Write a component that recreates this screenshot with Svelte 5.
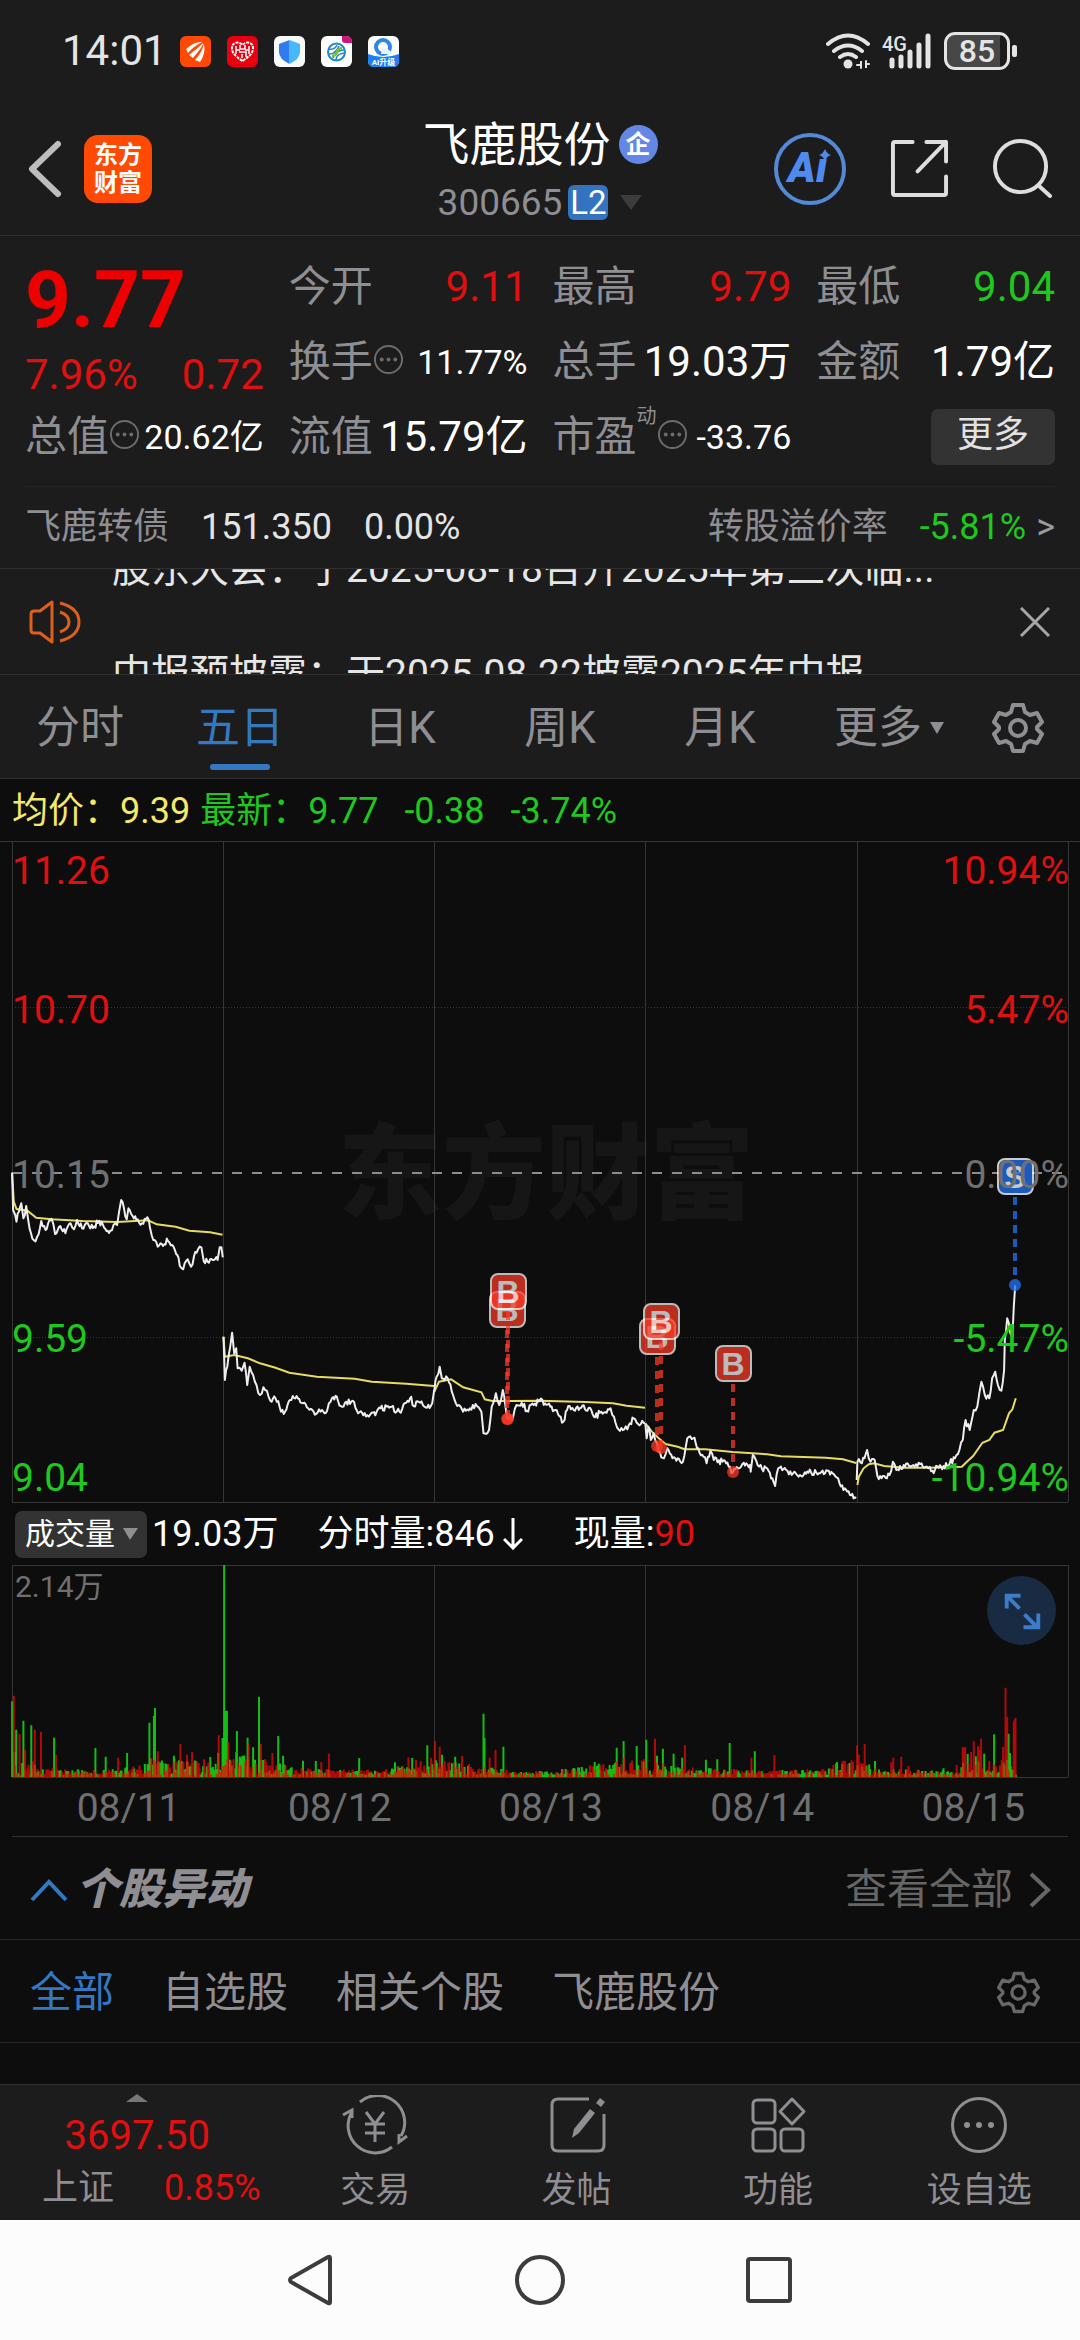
<script>
  // Chart samples: x in 2.904 units per pixel, y in thirds of a pixel.
  const SX = 2.904;
  const PRICE_TOP = 299;

  const priceDays = [
    [[35,98],[38,210],[44,225],[48,245],[55,215],[62,190],[68,235],[76,198],[82,240],[90,280],[98,300],[108,290],[120,243],[132,270],[150,236],[160,282],[175,258],[190,280],[205,250],[215,268],[224,240],[238,265],[255,250],[270,264],[288,242],[302,262],[320,272],[330,254],[340,255],[346,215],[352,180],[360,205],[368,238],[373,205],[385,228],[400,238],[412,250],[428,232],[436,265],[445,300],[458,320],[470,312],[488,303],[500,315],[515,345],[522,378],[532,388],[545,358],[555,380],[563,350],[575,328],[585,322],[592,365],[610,358],[632,360],[638,322],[643,322],[647,352]],
    [[649,590],[653,720],[660,680],[668,625],[674,578],[680,640],[686,625],[690,685],[702,692],[710,668],[718,735],[725,680],[735,705],[745,735],[755,765],[765,742],[775,752],[785,782],[800,775],[812,800],[824,822],[835,795],[850,768],[865,775],[880,790],[895,805],[918,822],[935,810],[950,812],[960,785],[978,770],[990,798],[1005,785],[1028,785],[1040,820],[1055,826],[1075,824],[1090,826],[1105,805],[1130,803],[1160,815],[1180,788],[1194,770],[1198,795],[1220,788],[1240,803],[1255,790],[1261,750]],
    [[1261,755],[1268,710],[1277,680],[1283,715],[1300,715],[1312,755],[1328,798],[1345,815],[1365,805],[1385,798],[1398,815],[1404,880],[1420,870],[1428,800],[1440,760],[1450,795],[1460,750],[1468,800],[1473,835],[1490,832],[1500,795],[1515,788],[1530,812],[1550,795],[1568,780],[1583,790],[1598,800],[1613,810],[1636,845],[1650,798],[1666,810],[1688,803],[1713,803],[1728,832],[1746,815],[1773,805],[1783,830],[1796,868],[1813,868],[1826,855],[1840,835],[1853,852],[1873,848]],
    [[1874,850],[1878,895],[1883,860],[1890,900],[1898,880],[1908,910],[1913,935],[1928,955],[1938,925],[1953,955],[1968,955],[1983,965],[1996,895],[2013,895],[2028,925],[2043,950],[2052,970],[2063,932],[2073,960],[2098,965],[2116,980],[2128,997],[2143,985],[2160,968],[2178,975],[2180,995],[2186,945],[2200,975],[2213,988],[2228,985],[2243,1015],[2251,1038],[2260,985],[2283,990],[2303,1000],[2323,1005],[2348,998],[2378,1000],[2403,992],[2418,1000],[2438,1030],[2453,1045],[2468,1065],[2486,1075]],
    [[2488,1020],[2490,965],[2503,970],[2518,930],[2528,965],[2540,960],[2548,1008],[2568,1008],[2583,1005],[2593,965],[2603,990],[2628,980],[2648,978],[2668,968],[2688,980],[2708,992],[2733,980],[2758,970],[2773,955],[2786,930],[2796,900],[2804,840],[2816,870],[2828,810],[2838,800],[2844,760],[2850,725],[2860,765],[2873,775],[2881,715],[2890,695],[2898,735],[2908,752],[2916,690],[2918,600],[2925,535],[2934,580],[2940,590],[2944,500],[2948,436]]
  ];

  const averageDays = [
    [[35,98],[40,185],[48,207],[80,212],[105,233],[150,238],[240,243],[340,246],[430,241],[455,253],[510,260],[550,272],[610,277],[646,284]],
    [[649,590],[653,650],[680,645],[720,655],[755,670],[800,683],[840,698],[920,710],[1030,716],[1080,725],[1180,731],[1261,738]],
    [[1261,755],[1275,725],[1310,718],[1345,742],[1398,757],[1408,778],[1430,783],[1568,782],[1700,786],[1780,790],[1820,797],[1873,803]],
    [[1874,850],[1893,875],[1913,895],[1933,912],[1968,920],[1988,928],[2048,928],[2128,936],[2228,943],[2268,949],[2398,953],[2448,958],[2486,969]],
    [[2490,1035],[2494,1010],[2508,985],[2523,973],[2538,970],[2568,978],[2628,983],[2698,983],[2793,980],[2808,965],[2826,948],[2853,908],[2873,900],[2888,878],[2913,870],[2930,820],[2940,808],[2950,775]]
  ];

  function randomFrom(seed) {
    let s = seed;
    return () => {
      s = (s * 16807) % 2147483647;
      return s / 2147483647;
    };
  }

  const point = (x, y) => `${(x / SX).toFixed(1)},${(PRICE_TOP + y / 3).toFixed(1)}`;

  function smoothLine(samples) {
    return samples.map(([x, y]) => point(x, y)).join(' ');
  }

  // Minute ticks wobble by about half a cent between the stored samples.
  function tickLine(samples, seed) {
    const random = randomFrom(seed);
    const out = [];
    for (let i = 0; i < samples.length - 1; i++) {
      const [x0, y0] = samples[i];
      const [x1, y1] = samples[i + 1];
      out.push(point(x0, y0));
      const steps = Math.floor((x1 - x0) / 3.5);
      for (let k = 1; k < steps; k++) {
        const t = k / steps;
        out.push(point(x0 + (x1 - x0) * t, y0 + (y1 - y0) * t + (random() - 0.5) * 19));
      }
    }
    const last = samples[samples.length - 1];
    out.push(point(last[0], last[1]));
    return out.join(' ');
  }

  const priceLines = priceDays.map((d, i) => tickLine(d, 41 + i * 97));
  const averageLines = averageDays.map(smoothLine);

  const markers = [
    { x: 507, top: 451, dot: 578, kind: 'B' },
    { x: 508, top: 433, dot: 578, kind: 'B' },
    { x: 657, top: 478, dot: 605, kind: 'B' },
    { x: 661, top: 463, dot: 607, kind: 'B' },
    { x: 733, top: 505, dot: 631, kind: 'B' },
    { x: 1015, top: 318, dot: 444, kind: 'S' }
  ];

  const leftAxis = [['11.26', 43, 'up'], ['10.70', 182, 'up'], ['10.15', 347, 'flat'], ['9.59', 511, 'down'], ['9.04', 650, 'down']];
  const rightAxis = [['10.94%', 43, 'up'], ['5.47%', 182, 'up'], ['0.00%', 347, 'flat'], ['-5.47%', 511, 'down'], ['-10.94%', 650, 'down']];
  const columns = [12, 223, 434, 645, 857, 1068];

  const volumeLevel = [[35,90],[60,60],[130,25],[200,20],[300,15],[400,30],[450,60],[540,45],[620,60],[660,90],[700,60],[780,50],[850,25],[950,20],[1100,15],[1200,35],[1270,60],[1350,35],[1480,15],[1568,12],[1650,20],[1780,40],[1880,55],[1960,25],[2100,20],[2200,15],[2380,18],[2450,50],[2500,40],[2560,20],[2780,12],[2800,70],[2850,50],[2900,30],[2920,80],[2953,30]];
  const greenPeaks = [[35,227],[47,142],[68,169],[91,155],[157,118],[277,87],[307,61],[369,72],[434,163],[447,184],[450,207],[505,64],[646,117],[651,637],[656,199],[659,199],[688,138],[719,118],[735,89],[752,241],[808,123],[822,64],[880,49],[917,48],[1043,57],[1147,44],[1197,57],[1241,95],[1284,67],[1322,61],[1404,190],[1407,117],[1462,91],[1727,45],[1791,88],[1811,108],[1849,93],[1877,112],[1908,64],[1925,85],[1956,70],[1981,58],[2050,52],[2083,53],[2119,102],[2192,77],[2446,39],[2541,48],[2740,26],[2858,70],[2887,128],[2929,130],[2933,72]];
  const redPeaks = [[40,244],[57,129],[73,82],[101,142],[119,136],[163,67],[343,57],[458,77],[524,99],[543,67],[558,75],[635,125],[663,104],[722,100],[758,100],[791,72],[933,45],[955,70],[1186,59],[1208,52],[1252,57],[1263,108],[1277,91],[1342,63],[1422,58],[1439,82],[1813,57],[1830,42],[1902,115],[1989,96],[2182,58],[2249,66],[2473,50],[2489,95],[2494,67],[2511,99],[2588,44],[2594,58],[2617,61],[2638,34],[2778,36],[2796,89],[2799,86],[2803,90],[2820,75],[2828,107],[2840,92],[2844,80],[2849,115],[2873,48],[2913,90],[2920,268],[2925,180],[2944,165],[2946,172],[2949,177]];

  function levelAt(x) {
    for (let i = 1; i < volumeLevel.length; i++) {
      const [x1, y1] = volumeLevel[i];
      const [x0, y0] = volumeLevel[i - 1];
      if (x <= x1) return y0 + ((y1 - y0) * (x - x0)) / (x1 - x0);
    }
    return 12;
  }

  function buildVolume() {
    const random = randomFrom(733);
    const paths = { green: '', red: '' };
    const bar = (x, h) => `M${(x / SX).toFixed(1)} 212v${(-h / 3).toFixed(1)}`;
    for (let x = 36; x < 2953; x += 2.6) {
      const h = 6 + levelAt(x) * Math.pow(random(), 1.4);
      paths[random() < 0.42 ? 'green' : 'red'] += bar(x, h);
    }
    greenPeaks.forEach(([x, h]) => (paths.green += bar(x, h)));
    redPeaks.forEach(([x, h]) => (paths.red += bar(x, h)));
    return paths;
  }
  const volume = buildVolume();

  const dates = ['08/11', '08/12', '08/13', '08/14', '08/15'];
  const periods = ['分时', '五日', '日K', '周K', '月K'];
  const filters = ['全部', '自选股', '相关个股', '飞鹿股份'];
  let period = $state('五日');
  let filter = $state('全部');
</script>

{#snippet info()}
  <svg class="info" viewBox="0 0 32 32" aria-hidden="true">
    <circle cx="16" cy="16" r="14" fill="none" stroke="#6c6c6e" stroke-width="2" />
    <circle cx="9" cy="16" r="2" /><circle cx="16" cy="16" r="2" /><circle cx="23" cy="16" r="2" />
  </svg>
{/snippet}

{#snippet gear()}
  <svg class="gear" viewBox="0 0 52 52" fill="none" stroke="currentColor" stroke-width="4" stroke-linejoin="round" aria-hidden="true">
    <path d="M21 3h10l2 7 5 3 7-2 5 9-5 5v2l5 5-5 9-7-2-5 3-2 7H21l-2-7-5-3-7 2-5-9 5-5v-2l-5-5 5-9 7 2 5-3z" />
    <circle cx="26" cy="26" r="8" />
  </svg>
{/snippet}

<main>
  <div class="status">
    <span class="clock">14:01</span>
    <div class="apps">
      <svg viewBox="0 0 31 31"><rect width="31" height="31" rx="6" fill="#ff4a06" /><path d="M6 13q9-8 16-7Q14 10 8 17zM9 19q8-6 14-12 1 2-10 15zM15 24q6-6 9-16 2 9-4 18z" fill="#fff" /></svg>
      <svg viewBox="0 0 31 31"><rect width="31" height="31" rx="6" fill="#e90010" /><path d="M15.500 25C8 20 5 17 5 12c0-6 7-7 10.500-3C19 5 26 6 26 12c0 5-3 8-10.500 13z" fill="#e90010" stroke="#fff" stroke-width="2" stroke-dasharray="3 1" /><path d="M9 10v8M13 9v4h5V9M22 10v8M12 16h7v5M9 14h4M18 14h4M15 18v4" stroke="#fff" stroke-width="1.500" fill="none" /></svg>
      <svg viewBox="0 0 31 31"><rect width="31" height="31" rx="6" fill="#f8f9fb" /><path d="M15.500 4 26 8v8q0 7-10.500 12z" fill="#45b8ff" /><path d="M15.500 4 5 8v8q0 7 10.500 12z" fill="#2f7cf0" /></svg>
      <svg viewBox="0 0 31 31"><rect width="31" height="31" rx="6" fill="#fff" /><path d="M21 0h4q6 0 6 6v1h-7q-3 0-3-3z" fill="#cc1480" /><circle cx="15.500" cy="16" r="8.500" fill="none" stroke="#2287c9" stroke-width="2" /><path d="M8 13q6 1 8-4M7 18q7 1 11-8M15 24q0-6 8-7M12 22q3-8 11-8" fill="none" stroke="#2287c9" stroke-width="1.500" /><path d="M11 20q5-1 5-4t5-4" fill="none" stroke="#7cc22e" stroke-width="2.500" /></svg>
      <svg viewBox="0 0 31 31"><rect width="31" height="31" rx="6" fill="#fff" /><path d="M0 18q15 6 31 0v7q0 6-6 6H6q-6 0-6-6z" fill="#1c80f2" /><circle cx="15" cy="11" r="7" fill="none" stroke="#2a86ee" stroke-width="4" /><path d="M14 13q6-3 10 5H13z" fill="#e6f2ff" /><text x="15.500" y="29" text-anchor="middle" class="tiny">AI升级</text></svg>
    </div>
    <div class="signals">
      <svg class="wifi" viewBox="0 0 44 36" fill="none" stroke="#e4e4e4" stroke-width="4" stroke-linecap="round">
        <path d="M2 11Q22-6 42 11M8 18q14-11 28 0M14 24q8-6 16 0" /><circle cx="22" cy="31" r="4.500" fill="#e4e4e4" stroke="none" /><path d="M31 32h4v-4v7M40 28v7v-4h3" stroke-width="2" />
      </svg>
      <svg class="cell" viewBox="0 0 50 36"><text x="0" y="18" class="net">4G</text><g stroke="#e4e4e4" stroke-width="5" stroke-linecap="round"><path d="M10 27v6M19 24v9M28 19v14M37 12v21M46 3v30" /></g></svg>
      <span class="battery"><span>85</span></span>
    </div>
  </div>

  <header class="top">
    <div class="side">
      <button class="bare" aria-label="返回"><svg class="back" viewBox="0 0 34 58"><path d="M30 4 4 29l26 25" fill="none" stroke="#bdbdbd" stroke-width="6" stroke-linecap="round" stroke-linejoin="round" /></svg></button>
      <span class="brand"><span>东方</span><span>财富</span></span>
    </div>
    <div class="title">
      <h1>飞鹿股份<span class="corp">企</span></h1>
      <button class="bare code">300665<span class="level">L2</span><svg class="tri" viewBox="0 0 22 15"><path d="M0 0h22L11 15z" fill="#3c3c3e" /></svg></button>
    </div>
    <div class="side actions">
      <button class="bare" aria-label="Ai">
        <svg class="ai" viewBox="0 0 72 72"><circle cx="36" cy="36" r="34" fill="none" stroke="#5489d6" stroke-width="4" /><text x="14" y="49" class="ailogo">Aı</text><path d="M51 16q2 5 6 6-4 1-6 6-2-5-6-6 4-1 6-6z" fill="#4f8bef" /></svg>
      </button>
      <button class="bare" aria-label="分享">
        <svg class="share" viewBox="0 0 60 60" fill="none" stroke="#dedede" stroke-width="4" stroke-linecap="round" stroke-linejoin="round"><path d="M23 3H5q-2 0-2 2v50q0 2 2 2h50q2 0 2-2V38M37 3h20v20M57 3 28 33" /></svg>
      </button>
      <button class="bare" aria-label="搜索">
        <svg class="share" viewBox="0 0 60 60" fill="none" stroke="#dedede" stroke-width="4" stroke-linecap="round"><circle cx="28" cy="28" r="26" /><path d="M46 47 58 58" /></svg>
      </button>
    </div>
  </header>

  <section class="quote">
    <div class="last"><strong>9.77</strong><div class="change up"><span>7.96%</span><span>0.72</span></div></div>
    <div class="cell-item"><span>今开</span><b class="up">9.11</b></div>
    <div class="cell-item"><span>最高</span><b class="up">9.79</b></div>
    <div class="cell-item"><span>最低</span><b class="down">9.04</b></div>
    <div class="cell-item"><span class="tagged">换手{@render info()}</span><b class="small">11.77%</b></div>
    <div class="cell-item"><span>总手</span><b>19.03万</b></div>
    <div class="cell-item"><span>金额</span><b>1.79亿</b></div>
    <div class="cell-item"><span class="tagged">总值{@render info()}</span><b class="small">20.62亿</b></div>
    <div class="cell-item"><span>流值</span><b>15.79亿</b></div>
    <div class="cell-item"><span class="tagged">市盈<sup>动</sup>{@render info()}</span><b class="small">-33.76</b></div>
    <div class="cell-item end"><button class="more">更多</button></div>
  </section>

  <a class="bond" href="#bond">
    <span class="name">飞鹿转债</span><span>151.350</span><span>0.00%</span>
    <span class="name push">转股溢价率</span><span class="down">-5.81%</span><span class="gt">&gt;</span>
  </a>

  <section class="news">
    <svg class="speaker" viewBox="0 0 52 44" fill="none" stroke="#dd5f1c" stroke-width="3" stroke-linejoin="round"><path d="M23 2v40L11 33H5q-3 0-3-3V14q0-3 3-3h6z" /><path d="M31 3q19 5 19 19T31 41M31 12q9 3 9 10t-9 10" /></svg>
    <div class="ticker"><p>股东大会：于2025-08-18召开2025年第三次临...</p><p>中报预披露：于2025-08-22披露2025年中报</p></div>
    <button class="bare" aria-label="关闭"><svg class="close" viewBox="0 0 30 30"><path d="M1 1l28 28M29 1 1 29" stroke="#a6a6a8" stroke-width="3" /></svg></button>
  </section>

  <nav class="periods">
    {#each periods as p}
      <button class="bare" class:on={period === p} onclick={() => (period = p)}>{p}</button>
    {/each}
    <button class="bare">更多<svg class="caret" viewBox="0 0 14 12"><path d="M0 0h14L7 12z" fill="currentColor" /></svg></button>
    <button class="bare settings" aria-label="设置">{@render gear()}</button>
  </nav>

  <div class="legend">
    <span class="avg">均价：9.39</span><span class="down">最新：9.77</span><span class="down">-0.38</span><span class="down">-3.74%</span>
  </div>

  <svg class="plot" viewBox="0 0 1080 662" role="img" aria-label="五日分时图">
    <text class="watermark" x="546" y="370" text-anchor="middle">东方财富</text>
    <g stroke="#363636" stroke-width="1">
      {#each columns as x}<path d="M{x}.5 0V661" />{/each}
      <path d="M0 .5H1080M12 661.500H1068" />
      <path d="M12 166.500H1068M12 496.500H1068" stroke-dasharray="1 2" />
    </g>
    <path d="M12 332H1068" stroke="#8c8c8c" stroke-width="2" stroke-dasharray="10 10" />
    {#each averageLines as pts}<polyline points={pts} fill="none" stroke="#e6dc62" stroke-width="2" />{/each}
    {#each priceLines as pts}<polyline points={pts} fill="none" stroke="#eee" stroke-width="2" stroke-linejoin="round" />{/each}
    {#each markers as m}
      <g class={m.kind === 'B' ? 'buy' : 'sell'}>
        <path d="M{m.x} {m.top + 38}V{m.dot}" stroke-width="4" stroke-dasharray="8 6" />
        <circle cx={m.x} cy={m.dot} r="6" />
        <rect x={m.x - 17} y={m.top} width="35" height="35" rx="7" />
        <text x={m.x} y={m.top + 29} text-anchor="middle">{m.kind}</text>
      </g>
    {/each}
    {#each leftAxis as [t, y, c]}<text class="axis {c}" x="12" {y}>{t}</text>{/each}
    {#each rightAxis as [t, y, c]}<text class="axis {c}" x="1069" {y} text-anchor="end">{t}</text>{/each}
  </svg>

  <div class="volume-bar">
    <label class="picker"><select aria-label="指标"><option>成交量</option></select><svg viewBox="0 0 15 12"><path d="M0 0h15L7 12z" fill="#8e8e93" /></svg></label>
    <span class="total">19.03万</span><span class="minute">分时量:846<svg class="fall" viewBox="0 0 20 32"><path d="M10 0v30M1 21l9 9 9-9" fill="none" stroke="#fff" stroke-width="3" /></svg></span><span>现量:<span class="up">90</span></span>
  </div>

  <div class="volume">
    <svg class="plot" viewBox="0 0 1080 213" role="img" aria-label="成交量图">
      <g stroke="#363636" stroke-width="1" fill="none">
        {#each columns as x}<path d="M{x}.5 0V212" />{/each}
        <path d="M12 .5H1068M12 212.500H1068" />
      </g>
      <path d={volume.green} stroke="#14d014" stroke-opacity=".9" stroke-width="2" />
      <path d={volume.red} stroke="#ee0808" stroke-opacity=".72" stroke-width="2" />
      <text class="peak" x="15" y="32">2.14万</text>
    </svg>
    <button class="bare expand" aria-label="全屏"><svg viewBox="0 0 70 70" fill="none" stroke="#3c7cc8" stroke-width="4"><path d="M20 33V20h14M20 20l13 13M38 39l13 13M52 38v14H37" /></svg></button>
  </div>

  <div class="dates">{#each dates as d}<span>{d}</span>{/each}</div>

  <section class="moves">
    <button class="bare fold"><svg viewBox="0 0 38 24"><path d="M2 22 19 4l17 18" fill="none" stroke="#3478c2" stroke-width="4" /></svg><h2>个股异动</h2></button>
    <a href="#all">查看全部<svg viewBox="0 0 22 36"><path d="M2 2l17 16L2 34" fill="none" stroke="currentColor" stroke-width="4" /></svg></a>
  </section>

  <nav class="filters">
    {#each filters as f}
      <button class="bare" class:on={filter === f} onclick={() => (filter = f)}>{f}</button>
    {/each}
    <button class="bare settings" aria-label="设置">{@render gear()}</button>
  </nav>

  <div class="feed"></div>

  <nav class="dock">
    <button class="bare index">
      <svg viewBox="0 0 22 8"><path d="M0 8 11 0l11 8z" fill="#77777a" /></svg>
      <span class="points up">3697.50</span>
      <span class="pair"><span>上证</span><span class="up">0.85%</span></span>
    </button>
    <button class="bare">
      <svg viewBox="0 0 66 60" fill="none" stroke="#8e8e93" stroke-width="3"><path d="M18 7A27 27 0 0 1 59 41M50 52A27 27 0 0 1 10 17M1 20l9-5v8M65 41l-8 6v-8" /><path d="M24 17l9 12 9-12M33 29v18M23 29h20M23 38h20" /></svg>交易
    </button>
    <button class="bare">
      <svg viewBox="0 0 66 60" fill="none" stroke="#8e8e93" stroke-width="3"><path d="M45 4H14q-6 0-6 6v40q0 6 6 6h40q6 0 6-6V19" /><path d="M46 14l5 4-16 20-7 5 2-9zM52 8l4-5 5 4-4 5z" fill="#8e8e93" stroke="none" /></svg>发帖
    </button>
    <button class="bare">
      <svg viewBox="0 0 66 60" fill="none" stroke="#8e8e93" stroke-width="3"><rect x="8" y="5" width="22" height="23" rx="4" /><rect x="8" y="34" width="22" height="22" rx="4" /><rect x="36" y="34" width="22" height="22" rx="4" /><path d="M47 4l12 12.500L47 29 35 16.500z" stroke-linejoin="round" /></svg>功能
    </button>
    <button class="bare">
      <svg viewBox="0 0 66 60" fill="none" stroke="#8e8e93" stroke-width="3"><circle cx="33" cy="30" r="26.500" /><g fill="#8e8e93" stroke="none"><circle cx="21" cy="30" r="3" /><circle cx="33" cy="30" r="3" /><circle cx="45" cy="30" r="3" /></g></svg>设自选
    </button>
  </nav>

  <nav class="system">
    <button class="bare" aria-label="返回"><svg viewBox="0 0 52 52"><path d="M45 4v44q0 2-2 1L6 28q-2-2 0-4L43 3q2-1 2 1z" /></svg></button>
    <button class="bare" aria-label="主页"><svg viewBox="0 0 52 52"><circle cx="26" cy="26" r="23" /></svg></button>
    <button class="bare" aria-label="最近任务"><svg viewBox="0 0 52 52"><rect x="5" y="5" width="42" height="42" rx="2" /></svg></button>
  </nav>
</main>

<style>
  :global(body) { margin: 0; background: #0d0d0d; }
  main { display: flex; flex-direction: column; min-height: 100vh; background: #0d0d0d; color: #fff; font-family: Roboto, "Noto Sans CJK SC", sans-serif; font-size: 36px; line-height: 1; white-space: nowrap; overflow: hidden; }
  main * { box-sizing: border-box; }
  svg { display: block; flex: none; }
  .bare { display: flex; align-items: center; justify-content: center; padding: 0; border: 0; background: none; color: inherit; font: inherit; cursor: pointer; }
  a { color: inherit; text-decoration: none; }
  .up { color: #e01010; }
  .down { color: #1fc81f; }

  .status { display: flex; align-items: center; height: 102px; padding: 0 64px 0 62px; background: #1c1c1c; color: #e4e4e4; }
  .clock { font-size: 42px; }
  .apps { display: flex; gap: 16px; margin-left: 13px; }
  .apps svg { width: 31px; height: 31px; }
  .tiny { font-size: 8px; font-weight: 700; fill: #fff; }
  .signals { display: flex; align-items: center; gap: 12px; margin-left: auto; }
  .wifi { width: 44px; height: 36px; }
  .cell { width: 50px; height: 36px; }
  .net { font-size: 20px; font-weight: 500; fill: #e4e4e4; }
  .battery { position: relative; display: flex; align-items: center; width: 66px; height: 38px; margin-right: 6px; border: 3px solid #e4e4e4; border-radius: 11px; background: linear-gradient(90deg, #474747 88%, #1c1c1c 88%); }
  .battery span { flex: 1; text-align: center; font-size: 32px; font-weight: 500; }
  .battery::after { content: ""; position: absolute; right: -10px; top: 10px; width: 5px; height: 12px; border-radius: 2px; background: #e4e4e4; }

  .top { display: grid; grid-template-columns: 1fr auto 1fr; align-items: center; height: 134px; padding: 0 28px; background: #1c1c1c; border-bottom: 1px solid #303030; }
  .side { display: flex; align-items: center; gap: 22px; }
  .back { width: 34px; height: 58px; }
  .brand { display: flex; flex-direction: column; align-items: center; justify-content: center; gap: 4px; width: 68px; height: 68px; border-radius: 14px; background: #ff4a06; font-size: 24px; font-weight: 700; }
  .title { display: flex; flex-direction: column; align-items: center; gap: 16px; padding-top: 4px; }
  h1 { display: flex; align-items: center; gap: 8px; margin: 0; font-size: 47px; font-weight: 400; }
  .corp { display: grid; place-items: center; width: 39px; height: 39px; border-radius: 50%; background: #6487e6; font-size: 25px; font-weight: 700; }
  .code { gap: 6px; color: #8e8e93; font-size: 37px; }
  .level { display: grid; place-items: center; width: 40px; height: 35px; border-radius: 6px; background: #3374c0; color: #fff; font-size: 33px; }
  .tri { width: 22px; height: 15px; margin-left: 6px; }
  .actions { justify-content: flex-end; gap: 44px; }
  .ai { width: 72px; height: 72px; }
  .ailogo { font: italic 900 42px Roboto, sans-serif; fill: #4f8bef; }
  .share { width: 59px; height: 59px; }

  .quote { display: grid; grid-template-columns: repeat(4, minmax(0, 1fr)); grid-auto-rows: 75px; column-gap: 25px; padding: 13px 25px 12px; background: #1c1c1c; }
  .last { grid-row: span 2; display: flex; flex-direction: column; justify-content: flex-end; gap: 14px; padding-bottom: 3px; }
  .last strong { color: #ee0000; font-size: 80px; font-weight: 700; }
  .change { display: flex; justify-content: space-between; font-size: 42px; }
  .cell-item { display: flex; align-items: center; justify-content: space-between; color: #8e8e93; font-size: 42px; }
  .cell-item b { font-weight: 400; color: #fff; }
  .cell-item b.up { color: #e01010; }
  .cell-item b.down { color: #1fc81f; }
  .cell-item b.small { font-size: 34px; }
  .cell-item.end { justify-content: flex-end; }
  .tagged { display: flex; align-items: center; }
  .info { width: 31px; height: 31px; margin-bottom: 4px; fill: #6c6c6e; }
  sup { align-self: flex-start; margin-top: -10px; font-size: 20px; line-height: 1; }
  .more { width: 124px; height: 56px; padding: 0 0 4px; border: 0; border-radius: 7px; background: #333; color: #e2e2e2; font: inherit; font-size: 36px; }

  .bond { display: flex; align-items: center; height: 83px; padding: 0 25px; gap: 32px; background: #1c1c1c; border-bottom: 1px solid #303030; color: #e4e4e4; background-image: linear-gradient(#242424, #242424); background-size: calc(100% - 50px) 1px; background-position: center top; background-repeat: no-repeat; }
  .name { color: #8e8e93; }
  .push { margin-left: auto; }
  .gt { margin-left: -22px; color: #9a9a9c; }

  .news { display: flex; align-items: center; height: 106px; padding: 0 30px 0 29px; background: #1c1c1c; border-bottom: 1px solid #303030; color: #e6e6e6; }
  .speaker { width: 52px; height: 44px; }
  .ticker { display: flex; flex: 1; flex-direction: column; justify-content: center; min-width: 0; height: 105px; margin: 0 32px 0 31px; overflow: hidden; font-size: 39px; }
  .ticker p { flex: none; margin: 0; line-height: 105px; }
  .close { width: 30px; height: 30px; }

  .periods { display: grid; grid-template-columns: repeat(5, 160fr) 178fr 80fr; align-items: stretch; height: 104px; padding: 2px 22px 0 0; background: #1c1c1c; border-bottom: 1px solid #303030; color: #8e8e93; font-size: 44px; }
  .periods .bare { position: relative; }
  .on { color: #3478c2; }
  .periods .on::after { content: ""; position: absolute; bottom: 8px; left: calc(50% - 30px); width: 60px; height: 6px; border-radius: 3px; background: #3478c2; }
  .caret { width: 14px; height: 12px; margin-left: 8px; }
  .gear { width: 52px; height: 52px; }

  .legend { display: flex; align-items: center; height: 62px; padding: 2px 12px 0; }
  .legend span { margin-right: 26px; }
  .legend .avg { margin-right: 10px; color: #f6e96a; }

  .plot { width: 100%; height: auto; }
  .watermark { font-size: 104px; font-weight: 900; fill: #161616; }
  .axis { font-size: 39px; }
  .axis.up { fill: #e01010; }
  .axis.down { fill: #1fc81f; }
  .axis.flat { fill: #707070; }
  .buy { fill: #ff3a26; stroke: #ff3a26; opacity: .72; }
  .sell { fill: #1f72ee; stroke: #1f72ee; opacity: .78; }
  .buy rect, .sell rect { stroke: #fff; stroke-width: 2; }
  .buy text, .sell text { fill: #fff; stroke: none; font: 700 32px "Liberation Sans", sans-serif; }
  .buy circle, .sell circle { stroke: none; }

  .volume-bar { display: flex; align-items: center; height: 62px; padding-left: 15px; }
  .picker { display: flex; align-items: center; width: 132px; height: 47px; margin-right: 5px; padding: 0 9px 0 10px; border-radius: 7px; background: #333; }
  .picker select { flex: 1; min-width: 0; height: 47px; padding: 0; border: 0; background: none; color: #fff; font: inherit; font-size: 30px; appearance: none; }
  .picker svg { width: 15px; height: 12px; }
  .total { margin-right: 39px; }
  .minute { display: flex; align-items: center; margin-right: 51px; }
  .fall { width: 20px; height: 32px; margin-left: 8px; }

  .volume { position: relative; }
  .peak { font-size: 30px; fill: #707070; }
  .expand { position: absolute; top: 11px; right: 24px; width: 69px; height: 69px; border-radius: 50%; background: #182b42; }
  .expand svg { width: 69px; height: 69px; }

  .dates { display: grid; grid-template-columns: repeat(5, 1fr); align-items: center; height: 59px; margin: 0 12px; padding-top: 3px; border-bottom: 1px solid #303030; color: #707070; font-size: 39px; }
  .dates span { padding-left: 22px; text-align: center; }

  .moves { display: flex; align-items: center; justify-content: space-between; height: 103px; padding: 3px 29px 0 30px; border-bottom: 1px solid #262626; }
  .fold { gap: 8px; }
  .fold svg { width: 38px; height: 24px; }
  h2 { margin: 0; color: #8e8e93; font-size: 43px; font-weight: 900; font-style: italic; }
  .moves a { display: flex; align-items: center; gap: 16px; color: #666; font-size: 42px; }
  .moves a svg { width: 22px; height: 36px; }

  .filters { display: flex; align-items: center; gap: 48px; height: 103px; padding: 3px 40px 0 30px; border-bottom: 1px solid #262626; color: #8e8e93; font-size: 42px; }
  .filters .settings { margin-left: auto; color: #68686a; }
  .filters .gear { width: 43px; height: 43px; }
  .filters .on { color: #3478c2; }
  .feed { flex: 1; min-height: 41px; }

  .dock { display: grid; grid-template-columns: 274fr repeat(4, 201fr); height: 136px; background: #1c1c1c; border-top: 1px solid #303030; color: #8e8e93; font-size: 35px; }
  .dock .bare { flex-direction: column; gap: 18px; padding-bottom: 2px; }
  .dock .bare > svg { width: 66px; height: 60px; }
  .dock .index { justify-content: flex-start; gap: 14px; padding: 9px 0 0; }
  .dock .index > svg { width: 22px; height: 8px; }
  .points { font-size: 40px; }
  .pair { display: flex; gap: 50px; padding-left: 28px; font-size: 36px; }

  .system { display: flex; align-items: center; justify-content: center; gap: 177px; height: 120px; background: #fcfcfc; }
  .system svg { width: 52px; height: 52px; fill: none; stroke: #3c3c3c; stroke-width: 4; }
</style>
